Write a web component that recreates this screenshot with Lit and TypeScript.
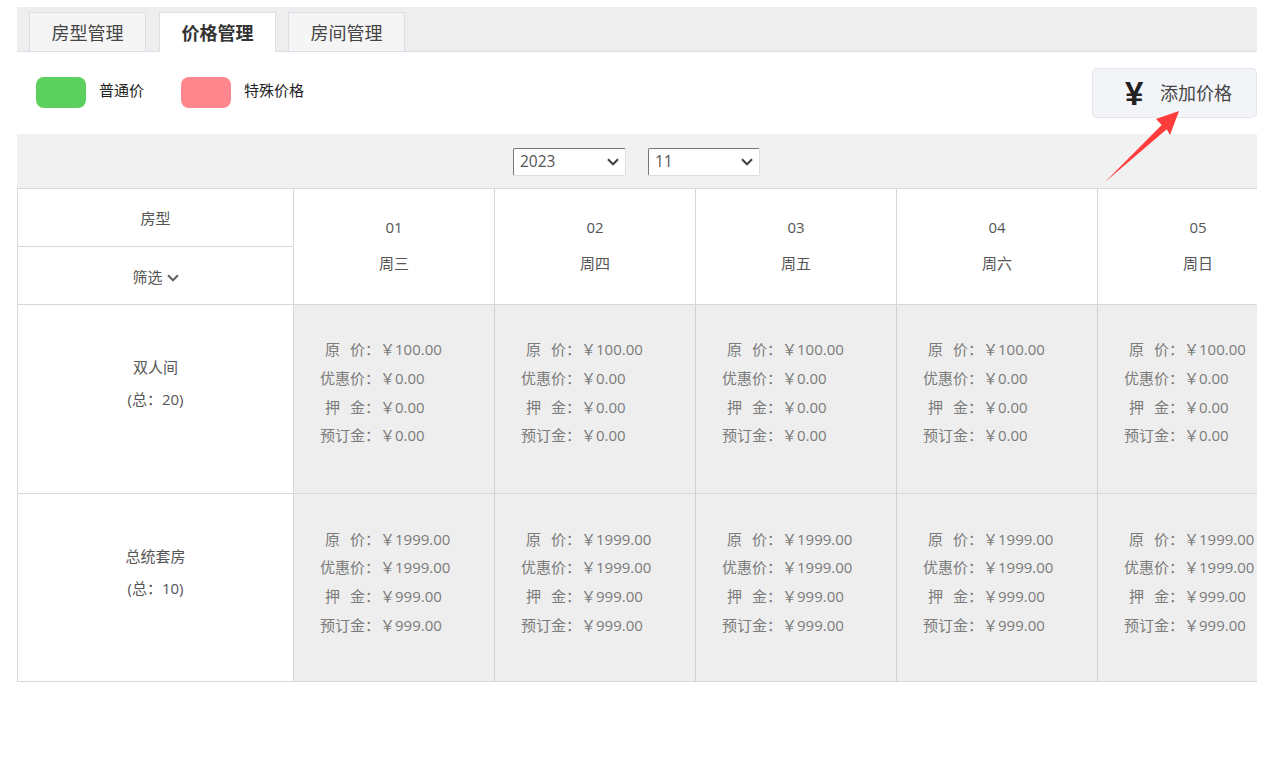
import { LitElement, html, css } from "lit";
import { customElement } from "lit/decorators.js";

const days = [
  ["01", "周三"],
  ["02", "周四"],
  ["03", "周五"],
  ["04", "周六"],
  ["05", "周日"],
];
const rooms = [
  { name: "双人间", total: 20, prices: ["100.00", "0.00", "0.00", "0.00"] },
  { name: "总统套房", total: 10, prices: ["1999.00", "1999.00", "999.00", "999.00"] },
];
const labels: string[][] = [["原", "价："], ["优惠价："], ["押", "金："], ["预订金："]];

const chevron = html`<svg class="chev" viewBox="0 0 12 8" aria-hidden="true"><path d="M1 1.2 6 6.2l5-5" fill="none" stroke="#666" stroke-width="2.2"/></svg>`;

@customElement("app-root")
export class AppRoot extends LitElement {
  static styles = css`
    :host {
      display: block;
      position: relative;
      height: 777px;
      box-sizing: border-box;
      padding: 7px 15px 0 17px;
      background: #fff;
      overflow: hidden;
      font-family: "Open Sans", "Noto Sans CJK SC", sans-serif;
      color: #333;
    }
    .tabs {
      display: flex;
      align-items: flex-end;
      height: 45px;
      box-sizing: border-box;
      padding-left: 12px;
      background: #eeeeee;
      border-bottom: 1px solid #d9dee8;
    }
    .tab {
      width: 117px;
      height: 40px;
      margin-bottom: -1px;
      margin-right: 13px;
      box-sizing: border-box;
      display: flex;
      align-items: center;
      justify-content: center;
      font-size: 18px;
      color: #444;
      background: #f5f5f5;
      border: 1px solid #d9dee8;
    }
    .tab.active {
      background: #fff;
      font-weight: 700;
      color: #333;
      border-bottom-color: #fff;
      margin-right: 12px;
    }
    .toolbar {
      display: flex;
      justify-content: space-between;
      height: 82px;
      box-sizing: border-box;
      padding: 16px 0 0 19px;
    }
    .legend {
      display: flex;
      align-items: flex-start;
      padding-top: 9px;
    }
    .swatch {
      width: 50px;
      height: 31px;
      border-radius: 8px;
      margin-right: 13px;
    }
    .green { background: #5cd05f; }
    .pink { background: #ff868c; }
    .legend span {
      font-size: 15px;
      line-height: 26px;
      color: #222;
      margin-right: 37px;
    }
    .add {
      width: 165px;
      height: 50px;
      box-sizing: border-box;
      display: flex;
      align-items: center;
      padding: 0 0 2px 32px;
      background: #f3f4f8;
      border: 1px solid #e4e6ec;
      border-radius: 5px;
      font-size: 18px;
      color: #444;
    }
    .yen {
      width: 35px;
      padding-top: 2px;
      font-family: "Liberation Sans", sans-serif;
      font-style: normal;
      font-weight: 700;
      font-size: 33px;
      line-height: 1;
      color: #222;
    }
    .dates {
      display: flex;
      justify-content: center;
      align-items: center;
      gap: 22px;
      height: 54px;
      padding: 1px 1px 0 0;
      box-sizing: border-box;
      background: #f1f1f1;
    }
    select {
      appearance: none;
      -webkit-appearance: none;
      height: 28px;
      box-sizing: border-box;
      padding: 0 0 2px 6px;
      font: 15.5px "Open Sans", "Noto Sans CJK SC", sans-serif;
      color: #555;
      background: #fff url("data:image/svg+xml,%3Csvg xmlns='http://www.w3.org/2000/svg' width='12' height='8'%3E%3Cpath d='M1 1.2 6 6.2l5-5' fill='none' stroke='%23444' stroke-width='2.2'/%3E%3C/svg%3E") no-repeat right 6px center;
      border: 1px solid #ddd;
      border-top-color: #777;
      border-left-color: #777;
      border-radius: 2px;
    }
    .y { width: 113px; }
    .m { width: 112px; }
    .grid {
      display: grid;
      grid-template-columns: 277px repeat(5, 201px);
      width: 1240px;
      overflow: hidden;
      border-top: 1px solid #d8d8d8;
      font-size: 15px;
      color: #555;
    }
    .corner {
      border-left: 1px solid #d8d8d8;
      border-right: 1px solid #d8d8d8;
      border-bottom: 1px solid #d8d8d8;
      box-sizing: border-box;
      height: 116px;
      display: grid;
      grid-template-rows: 58px 57px;
    }
    .corner div {
      display: flex;
      align-items: center;
      justify-content: center;
      gap: 4px;
    }
    .corner div:first-child {
      border-bottom: 1px solid #d8d8d8;
    }
    .corner div:last-child { padding-top: 1px; }
    .chev { width: 12px; height: 8px; margin-top: 3px; }
    .day {
      height: 116px;
      box-sizing: border-box;
      border-right: 1px solid #d8d8d8;
      border-bottom: 1px solid #d8d8d8;
      padding-bottom: 4px;
      display: flex;
      flex-direction: column;
      align-items: center;
      justify-content: center;
      gap: 14px;
      line-height: 22px;
    }
    .room {
      box-sizing: border-box;
      height: 188.5px;
      border-left: 1px solid #d8d8d8;
      border-right: 1px solid #d8d8d8;
      border-bottom: 1px solid #d8d8d8;
      display: flex;
      flex-direction: column;
      align-items: center;
      justify-content: center;
      gap: 10px;
      line-height: 22px;
      padding-bottom: 31px;
    }
    .cell {
      box-sizing: border-box;
      height: 188.5px;
      background: #eeeeee;
      border-right: 1px solid #d0d0d0;
      border-bottom: 1px solid #d8d8d8;
      padding: 30px 0 0 26px;
      color: #7b7b7b;
    }
    .cell.lower { padding-top: 31px; }
    .line {
      display: flex;
      height: 28.75px;
      line-height: 28.75px;
      white-space: nowrap;
    }
    .label {
      width: 60px;
      display: flex;
      justify-content: flex-end;
      gap: 10px;
    }
    .arrow {
      position: absolute;
      left: 1100px;
      top: 106px;
      width: 84px;
      height: 80px;
    }
  `;

  render() {
    return html`
      <div class="tabs">
        <div class="tab">房型管理</div>
        <div class="tab active">价格管理</div>
        <div class="tab">房间管理</div>
      </div>
      <div class="toolbar">
        <div class="legend">
          <div class="swatch green"></div><span>普通价</span>
          <div class="swatch pink"></div><span>特殊价格</span>
        </div>
        <div class="add"><i class="yen">¥</i>添加价格</div>
      </div>
      <div class="dates">
        <select class="y"><option>2023</option></select>
        <select class="m"><option>11</option></select>
      </div>
      <div class="grid">
        <div class="corner">
          <div>房型</div>
          <div>筛选${chevron}</div>
        </div>
        ${days.map((d) => html`<div class="day"><span>${d[0]}</span><span>${d[1]}</span></div>`)}
        ${rooms.map(
          (r, ri) => html`
            <div class="room"><span>${r.name}</span><span>(总：${r.total})</span></div>
            ${days.map(
              () => html`<div class="cell ${ri === 1 ? "lower" : ""}">
                ${labels.map(
                  (l, i) => html`<div class="line">
                    <div class="label">${l.map((t) => html`<span>${t}</span>`)}</div>
                    <span>￥${r.prices[i]}</span>
                  </div>`
                )}
              </div>`
            )}
          `
        )}
      </div>
      <svg class="arrow" viewBox="1100 106 84 80" aria-hidden="true">
        <polygon fill="#ff3c3c" points="1179,111 1156,119 1161.7,125 1105,182 1166.7,129.3 1170,135" />
      </svg>
    `;
  }
}
